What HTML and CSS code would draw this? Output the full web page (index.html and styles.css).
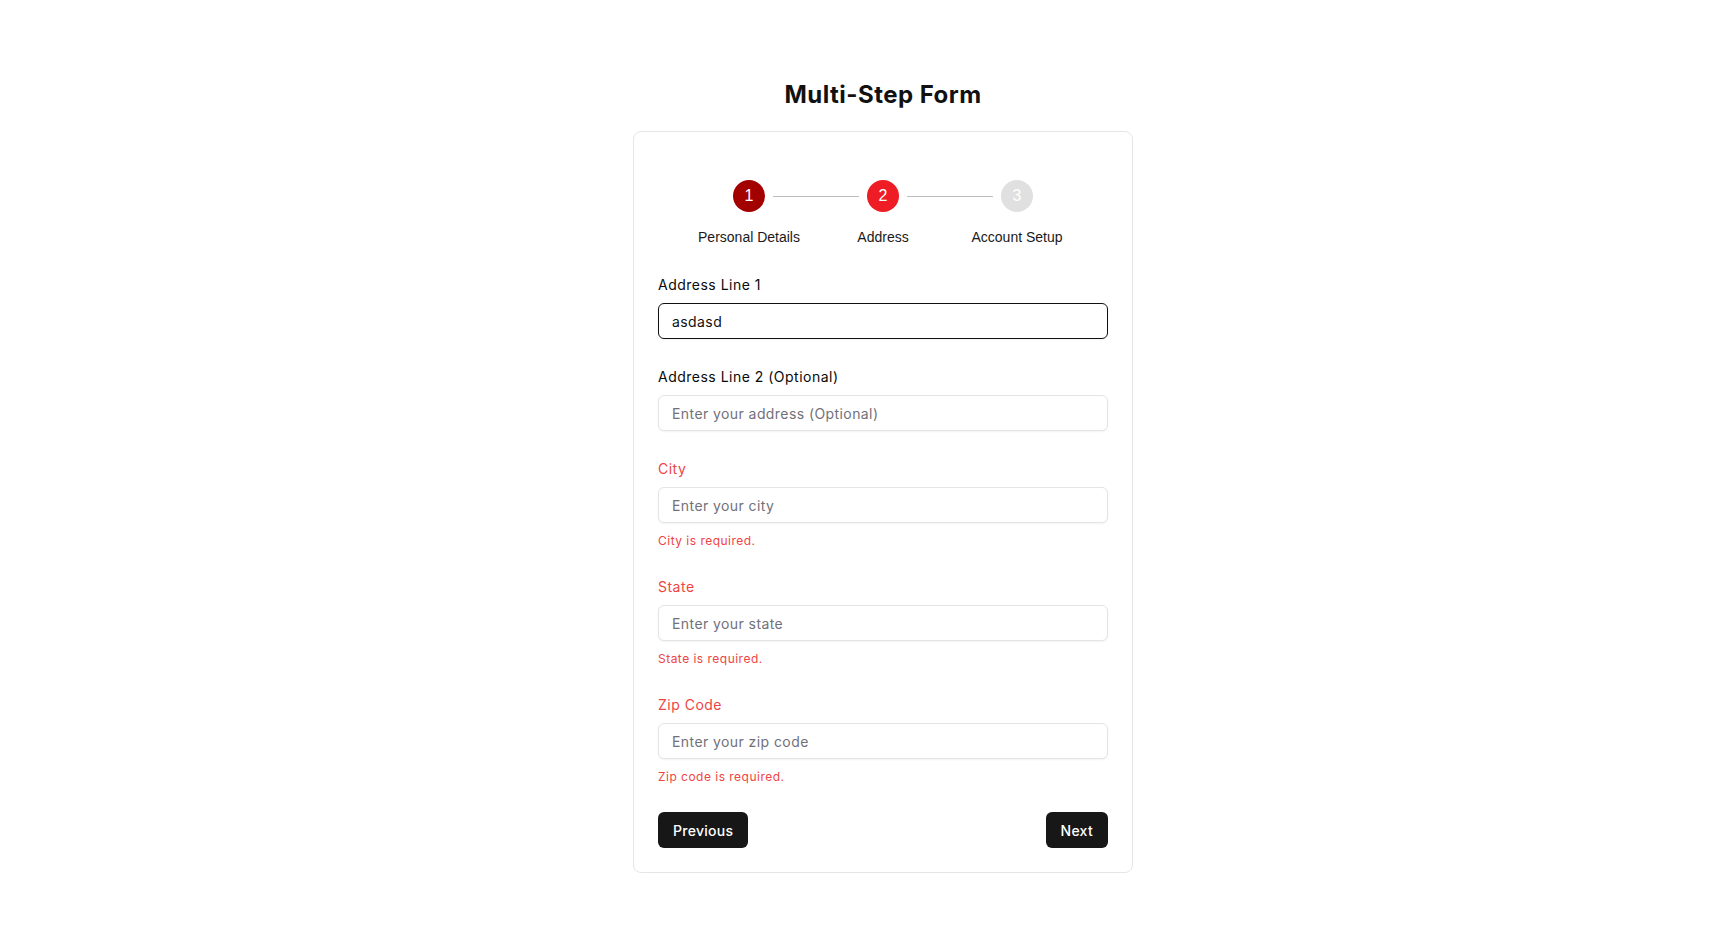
FILE: index.html
```html
<!DOCTYPE html>
<html lang="en">
<head>
<meta charset="utf-8">
<title>Multi-Step Form</title>
<link rel="stylesheet" href="styles.css">
</head>
<body>
<div class="page">
  <h1 class="title">Multi-Step Form</h1>
  <div class="card">
    <ol class="stepper">
      <li class="step done"><span class="dot">1</span><span class="step-label">Personal Details</span></li>
      <li class="step active"><span class="dot">2</span><span class="step-label">Address</span></li>
      <li class="step"><span class="dot">3</span><span class="step-label">Account Setup</span></li>
    </ol>
    <form class="form" onsubmit="return false">
      <div class="field">
        <label class="label" for="a1">Address Line 1</label>
        <input class="input focused" id="a1" type="text" value="asdasd" placeholder="Enter your address" autofocus>
      </div>
      <div class="field">
        <label class="label" for="a2">Address Line 2 (Optional)</label>
        <input class="input" id="a2" type="text" placeholder="Enter your address (Optional)">
      </div>
      <div class="field">
        <label class="label invalid" for="city">City</label>
        <input class="input" id="city" type="text" placeholder="Enter your city">
        <p class="error-text">City is required.</p>
      </div>
      <div class="field">
        <label class="label invalid" for="state">State</label>
        <input class="input" id="state" type="text" placeholder="Enter your state">
        <p class="error-text">State is required.</p>
      </div>
      <div class="field">
        <label class="label invalid" for="zip">Zip Code</label>
        <input class="input" id="zip" type="text" placeholder="Enter your zip code">
        <p class="error-text">Zip code is required.</p>
      </div>
      <div class="actions">
        <button class="btn" type="button">Previous</button>
        <button class="btn" type="button">Next</button>
      </div>
    </form>
  </div>
</div>
</body>
</html>
```

FILE: styles.css
```css
* { box-sizing: border-box; }

body {
  margin: 0;
  background: #ffffff;
  font-family: "Inter", "Open Sans", sans-serif;
  color: #111111;
}

.page {
  display: flex;
  flex-direction: column;
  align-items: center;
  padding: 79px 0 40px 30px;
}

.title {
  margin: 0 0 20px;
  font-size: 24px;
  line-height: 32px;
  font-weight: 700;
  letter-spacing: 0.02em;
  color: #111111;
}

.card {
  width: 500px;
  border: 1px solid #e6e6e6;
  border-radius: 8px;
  padding: 24px;
  background: #ffffff;
}

.stepper {
  list-style: none;
  margin: 0 0 28px;
  padding: 24px 0 0;
  display: flex;
  justify-content: center;
}

.step {
  position: relative;
  width: 134px;
  display: flex;
  flex-direction: column;
  align-items: center;
}

.step:not(:last-child)::after {
  content: "";
  position: absolute;
  top: 16px;
  left: calc(50% + 24px);
  width: 86px;
  height: 1px;
  background: #bdbdbd;
}

.dot {
  width: 32px;
  height: 32px;
  border-radius: 50%;
  display: flex;
  align-items: center;
  justify-content: center;
  background: #e0e0e0;
  color: #ffffff;
  font-family: "Liberation Sans", Arial, sans-serif;
  font-size: 16px;
}

.step.done .dot { background: #a30000; }
.step.active .dot { background: #ee1d25; }

.step-label {
  margin-top: 15px;
  font-family: "Liberation Sans", Arial, sans-serif;
  font-size: 14px;
  line-height: 20px;
  color: #1a1a1a;
  white-space: nowrap;
}

.form {
  display: flex;
  flex-direction: column;
}

.field {
  margin-bottom: 28px;
}

.label {
  display: block;
  margin-bottom: 8px;
  font-size: 14px;
  line-height: 20px;
  font-weight: 400;
  letter-spacing: 0.035em;
  color: #0a0a0a;
}

.label.invalid { color: #ef4444; }

.input {
  display: block;
  width: 100%;
  height: 36px;
  padding: 0 13px;
  border: 1px solid #e4e4e7;
  border-radius: 6px;
  background: #ffffff;
  font-family: inherit;
  font-size: 14px;
  letter-spacing: 0.03em;
  color: #111111;
  outline: none;
  box-shadow: 0 1px 2px rgba(0, 0, 0, 0.05);
}

.input::placeholder { color: #71717a; }

.input.focused,
.input:focus { border-color: #111111; }

.error-text {
  margin: 10px 0 0;
  font-size: 12px;
  line-height: 16px;
  letter-spacing: 0.04em;
  color: #ef4444;
}

.actions {
  display: flex;
  justify-content: space-between;
  margin-top: -1px;
}

.btn {
  height: 36px;
  padding: 0 15px;
  border: none;
  border-radius: 6px;
  background: #171717;
  color: #ffffff;
  font-family: inherit;
  font-size: 14px;
  font-weight: 500;
  letter-spacing: 0.02em;
  cursor: pointer;
}
```
